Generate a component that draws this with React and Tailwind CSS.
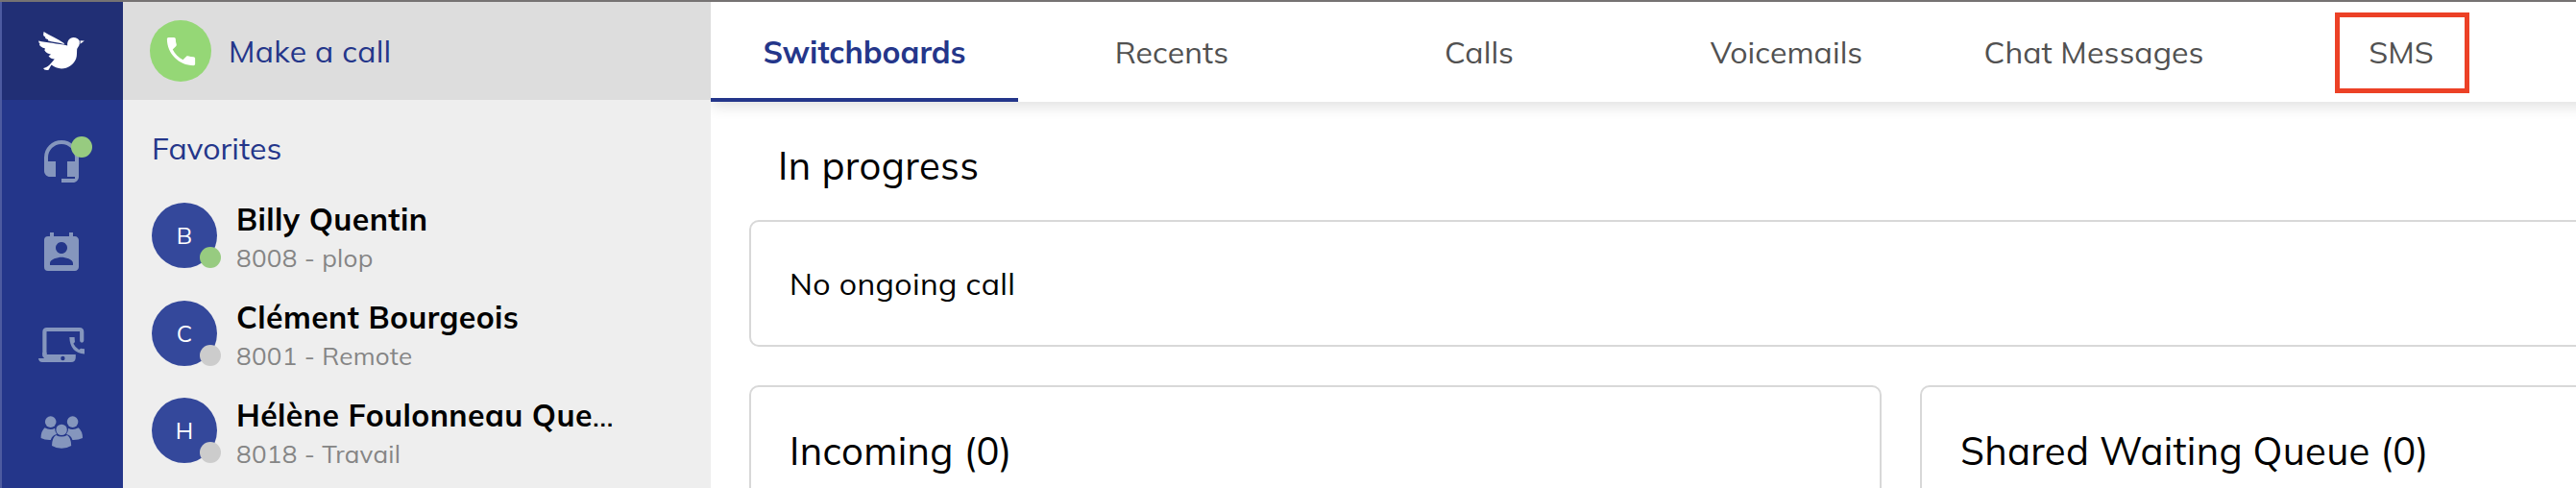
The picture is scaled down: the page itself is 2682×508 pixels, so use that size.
import { MdHeadsetMic, MdPermContactCalendar, MdPhone } from "react-icons/md";

const favorites = [
  { initial: "B", name: "Billy Quentin", line: "8008 - plop", online: true },
  { initial: "C", name: "Clément Bourgeois", line: "8001 - Remote" },
  { initial: "H", name: "Hélène Foulonneau Que", truncated: true, line: "8018 - Travail" },
];

const tabs = ["Switchboards", "Recents", "Calls", "Voicemails", "Chat Messages", "SMS"];

function BirdLogo() {
  return (
    <svg width="50" height="42" viewBox="39 32 50 42" fill="#fff" aria-hidden="true">
      <path d="M45.6 33.1C52 37.2 60 40.6 67 45.2L66.5 45.9C61 44.2 54 43.6 49.8 42.2C50.6 41.6 50.2 41.2 49 40.8C47.2 40.1 46.6 39.4 47.4 38.6C45.6 37.9 44.8 36.4 45.2 35.2Z" />
      <path d="M40.1 42.6C48 44.4 60 45.4 70.2 47.4C69.6 42.8 72.4 39 76.5 39C79.6 39 81.6 40.6 82.6 42.2L87.9 42.4L82.8 46.2C82.4 48 80.6 49.4 80.2 51C79.9 54 80.4 57.6 79.2 61C76.8 67.4 70.8 71.4 64 71.4C60 71.4 56.4 70 53.6 67.6C52.2 69 52 71 50.6 72.8C49.4 73.2 48 72.2 46.8 72.9C46.4 72 45.2 72 45.2 71C50 70.2 53.6 65.6 56.8 61.5C54.6 61.6 52 60.4 50.6 58.2C51.6 57.8 52.6 57.6 52.8 56.6C50.4 56.2 47.6 54.8 46.4 52.6C46.2 51.6 47.4 51 46.6 50.2C44 49.6 41.6 48.2 41 46.4C42 46 41.4 45.4 40.6 44.6Z" />
      <path d="M83.2 40.9V47.2" stroke="#212f75" strokeWidth="0.8" />
    </svg>
  );
}

function LaptopPhone() {
  return (
    <svg width="50" height="38" viewBox="39 340 50 38" fill="#8596bd" aria-hidden="true">
      <path d="M46.4 370V345.4Q46.4 343 48.8 343H82.8Q85.2 343 85.2 345.4V354.6" fill="none" stroke="#8596bd" strokeWidth="4.2" strokeLinecap="round" />
      <path fillRule="evenodd" d="M44.3 367H48.5V368.9H78.8V372Q78.8 377 74 377H44Q40.4 377 40 373H46Q44.3 371.6 44.3 369ZM65.4 370.8A2.2 2.2 0 1 0 65.4 375.2A2.2 2.2 0 1 0 65.4 370.8Z" />
      <path d="M72.3 351H77.6Q77.8 354 78 355.9L76.4 357.8Q78.4 361.8 82.2 364L84.2 362.7Q86 363 88 363.2V368.5Q73 367.6 72.3 351Z" />
    </svg>
  );
}

function PeopleGroup() {
  return (
    <svg width="46" height="36" viewBox="41 432.5 46 36" fill="#8596bd" aria-hidden="true">
      <circle cx="52.7" cy="439.6" r="5.8" />
      <circle cx="75.6" cy="439.6" r="5.8" />
      <path d="M46.6 445.8Q49.4 447.4 52.7 447.4Q55.4 447.4 57 446.2Q57.2 450.4 59.2 452.6Q54.2 453.6 52.8 458.4Q46.4 458.6 42.6 456.4Q42.6 449.4 46.6 445.8Z" />
      <path d="M81.6 445.8Q78.8 447.4 75.5 447.4Q72.8 447.4 71.2 446.2Q71 450.4 69 452.6Q74 453.6 75.4 458.4Q81.8 458.6 86 456.4Q86 449.4 81.6 445.8Z" />
      <circle cx="64.1" cy="447.9" r="5.7" />
      <path d="M58.2 453.4Q64 456.8 70 453.4Q74.2 456.4 74.2 464.6Q70 467.2 64.1 467.2Q58.2 467.2 54 464.6Q54 456.4 58.2 453.4Z" />
    </svg>
  );
}

function Rail() {
  return (
    <aside className="flex h-full w-32 shrink-0 flex-col border-l-2 border-[#4d5ba0] bg-[#24368a]">
      <div className="flex h-[102px] items-center justify-center bg-[#212f75] pr-0.5">
        <BirdLogo />
      </div>
      <div className="flex flex-col items-center pt-10 pr-0.5 text-[#8596bd]">
        <div className="relative">
          <MdHeadsetMic className="size-12" />
          <span className="absolute -top-0.5 -right-2 size-[22px] rounded-full bg-[#97cb80]" />
        </div>
        <MdPermContactCalendar className="mt-12 size-12" />
        <div className="mt-[52px]"><LaptopPhone /></div>
        <div className="mt-[54px]"><PeopleGroup /></div>
      </div>
    </aside>
  );
}

function Contacts() {
  return (
    <section className="relative z-10 h-full w-[612px] shrink-0 bg-[#eeeeee]">
      <div className="flex h-[102px] items-center bg-[#dddddd] pl-7">
        <div className="flex size-16 items-center justify-center rounded-full bg-[#95d776] text-white">
          <MdPhone className="size-[39px]" />
        </div>
        <span className="ml-[18px] text-[32px] leading-10 tracking-[0.3px] text-[#24368a]">Make a call</span>
      </div>
      <h2 className="mt-[30px] pl-[30px] text-[32px] leading-10 tracking-[0.05px] text-[#24368a]">Favorites</h2>
      <ul className="mt-5 pl-[30px]">
        {favorites.map((f) => (
          <li key={f.name} className="flex h-[102px] items-start last:-mt-px last:h-[103px]">
            <div className="relative mt-[17px] flex size-[68px] items-center justify-center rounded-full bg-[#34489b] text-2xl text-white">
              {f.initial}
              <span className={`absolute -right-1 bottom-0 size-[22px] rounded-full ${f.online ? "bg-[#97cb80]" : "bg-[#cccccc]"}`} />
            </div>
            <div className={`ml-5 whitespace-nowrap ${f.truncated ? "pt-[15px]" : "pt-3.5"}`}>
              <p className="text-[32px] leading-10 font-bold tracking-[0.4px] text-black">
                {f.name}
                {f.truncated && <span className="font-normal">…</span>}
              </p>
              <p className="mt-[5px] text-[26px] leading-8 tracking-[0.3px] text-[#858585]">{f.line}</p>
            </div>
          </li>
        ))}
      </ul>
    </section>
  );
}

function Tabs() {
  return (
    <nav className="flex h-[104px] w-[2438px] shrink-0 bg-white shadow-[0_5px_14px_rgba(0,0,0,0.12)]">
      {tabs.map((t, i) => (
        <div
          key={t}
          className={`relative flex w-80 shrink-0 items-center justify-center border-b-4 pt-1 text-[32px] leading-10 ${
            i === 0 ? "border-[#24368a] font-bold text-[#24368a]" : "border-transparent tracking-[0.1px] text-[#515151]"
          }`}
        >
          {t}
          {t === "SMS" && <span className="absolute top-[11px] left-[91px] h-[84px] w-[140px] border-5 border-[#ec4126]" />}
        </div>
      ))}
    </nav>
  );
}

export default function App() {
  return (
    <div className="flex h-[508px] w-[2682px] overflow-hidden border-t-2 border-[#767373] bg-white font-['Mulish','Nunito_Sans',Lato,sans-serif] text-black">
      <Rail />
      <Contacts />
      <main className="flex min-w-0 grow flex-col overflow-hidden">
        <Tabs />
        <div className="w-[2438px] pt-[41px] pl-10">
          <h1 className="pl-[30px] text-[40px] leading-[50px] tracking-[0.4px]">In progress</h1>
          <div className="mt-8 flex h-[132px] items-center rounded-[10px] border-2 border-[#d8d8d8] pl-10 text-[32px] tracking-[0.4px]">
            No ongoing call
          </div>
          <div className="mt-10 grid grid-cols-2 gap-10">
            {["Incoming (0)", "Shared Waiting Queue (0)"].map((title) => (
              <div key={title} className="h-60 rounded-[10px] border-2 border-[#d8d8d8] pt-[41px] pl-10">
                <h2 className="text-[40px] leading-[50px] tracking-[0.3px]">{title}</h2>
              </div>
            ))}
          </div>
        </div>
      </main>
    </div>
  );
}
